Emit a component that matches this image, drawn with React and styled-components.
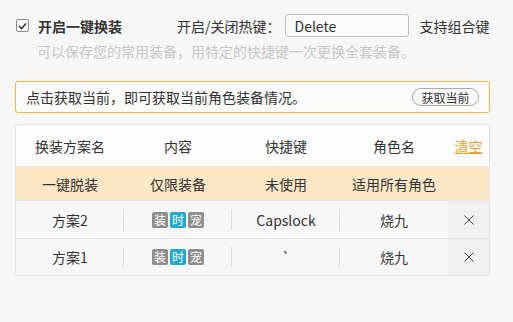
import React from 'react';
import styled, { createGlobalStyle } from 'styled-components';

const GlobalStyle = createGlobalStyle`
body {
  margin: 0;
  background: #f7f7f7;
  font-family: "Noto Sans CJK SC", "Microsoft YaHei", sans-serif;
  color: #333;
}
`;

const Page = styled.div`
width: 475px;
padding: 14px 0 0 15px;
`;

const TopRow = styled.div`
display: flex;
align-items: center;
height: 23px;
font-size: 14px;
`;

const EnableGroup = styled.label`
display: flex;
align-items: center;
width: 162px;
padding-left: 1px;
box-sizing: border-box;
`;

const Box = styled.span`
width: 13px;
height: 13px;
border: 1px solid #8a8a8a;
border-radius: 2px;
box-sizing: border-box;
background: #fff;
display: flex;
align-items: center;
justify-content: center;
margin-right: 9px;
`;

const Title = styled.span`
font-weight: bold;
`;

const HotkeyLabel = styled.span`
white-space: nowrap;
`;

const KeyInput = styled.div`
width: 124px;
height: 23px;
box-sizing: border-box;
border: 1px solid #bdbdbd;
border-radius: 3px;
background: #fafafa;
padding-left: 9px;
display: flex;
align-items: center;
margin-left: 4px;
`;

const Hint = styled.span`
margin-left: 11px;
`;

const Sub = styled.div`
margin: 4px 0 0 22px;
line-height: 20px;
font-size: 14px;
color: #c6c6c6;
`;

const Notice = styled.div`
margin-top: 20px;
height: 32px;
box-sizing: border-box;
border: 1px solid #f0b548;
border-radius: 3px;
background: #fafafa;
display: flex;
align-items: center;
justify-content: space-between;
padding: 0 10px 0 10px;
font-size: 14px;
`;

const Pill = styled.button`
height: 18px;
width: 67px;
border: 1px solid #a8a8a8;
border-radius: 9px;
background: #fafafa;
font-family: inherit;
font-size: 12px;
color: #333;
padding: 0;
display: flex;
align-items: center;
justify-content: center;
`;

const Table = styled.div`
margin-top: 11px;
border: 1px solid #e4e4e4;
border-radius: 3px;
overflow: hidden;
font-size: 14px;
`;

const Row = styled.div`
display: grid;
grid-template-columns: 108px 108px 108px 108px 1fr;
height: ${({ h }) => h}px;
background: ${({ bg }) => bg};
& + & {
  border-top: ${({ line }) => (line ? '1px solid #e2e2e2' : 'none')};
}
`;

const Cell = styled.div`
display: flex;
align-items: center;
justify-content: center;
position: relative;
background: ${({ shade }) => (shade ? '#efefef' : 'transparent')};
${({ divider }) => divider && `
&::after {
  content: '';
  position: absolute;
  right: 0;
  top: 8px;
  bottom: 8px;
  width: 1px;
  background: #dedede;
}
`}
`;

const Clear = styled.span`
color: #eba12c;
text-decoration: underline;
cursor: pointer;
`;

const Badges = styled.div`
display: flex;
gap: 2px;
`;

const Badge = styled.span`
width: 16px;
height: 16px;
border-radius: 2px;
background: ${({ blue }) => (blue ? '#22a9cf' : '#8e8e8e')};
color: #fff;
font-size: 12px;
display: flex;
align-items: center;
justify-content: center;
line-height: 1;
`;

const Check = () => (
  <svg width="9" height="8" viewBox="0 0 9 8">
    <path d="M1 4 L3.5 6.5 L8 1.5" fill="none" stroke="#333" strokeWidth="1.6" />
  </svg>
);

const Cross = () => (
  <svg width="10" height="10" viewBox="0 0 10 10">
    <path d="M0.5 0.5 L9.5 9.5 M9.5 0.5 L0.5 9.5" stroke="#444" strokeWidth="1" />
  </svg>
);

const plans = [
  { name: '方案2', key: 'Capslock', role: '烧九' },
  { name: '方案1', key: '`', role: '烧九' },
];

const App = () => (
  <>
    <GlobalStyle />
    <Page>
      <TopRow>
        <EnableGroup>
          <Box><Check /></Box>
          <Title>开启一键换装</Title>
        </EnableGroup>
        <HotkeyLabel>开启/关闭热键：</HotkeyLabel>
        <KeyInput>Delete</KeyInput>
        <Hint>支持组合键</Hint>
      </TopRow>
      <Sub>可以保存您的常用装备，用特定的快捷键一次更换全套装备。</Sub>
      <Notice>
        <span>点击获取当前，即可获取当前角色装备情况。</span>
        <Pill>获取当前</Pill>
      </Notice>
      <Table>
        <Row h={41} bg="#fdfdfd">
          <Cell>换装方案名</Cell>
          <Cell>内容</Cell>
          <Cell>快捷键</Cell>
          <Cell>角色名</Cell>
          <Cell><Clear>清空</Clear></Cell>
        </Row>
        <Row h={33} bg="#fbe7c5">
          <Cell>一键脱装</Cell>
          <Cell>仅限装备</Cell>
          <Cell>未使用</Cell>
          <Cell>适用所有角色</Cell>
          <Cell />
        </Row>
        {plans.map((p, i) => (
          <Row key={`plan-${i}`} h={i === 0 ? 37 : 36} bg="#f7f7f7" line={i > 0}>
            <Cell divider>{p.name}</Cell>
            <Cell divider>
              <Badges>
                <Badge>装</Badge>
                <Badge blue>时</Badge>
                <Badge>宠</Badge>
              </Badges>
            </Cell>
            <Cell divider>{p.key}</Cell>
            <Cell>{p.role}</Cell>
            <Cell shade><Cross /></Cell>
          </Row>
        ))}
      </Table>
    </Page>
  </>
);

export default App;
